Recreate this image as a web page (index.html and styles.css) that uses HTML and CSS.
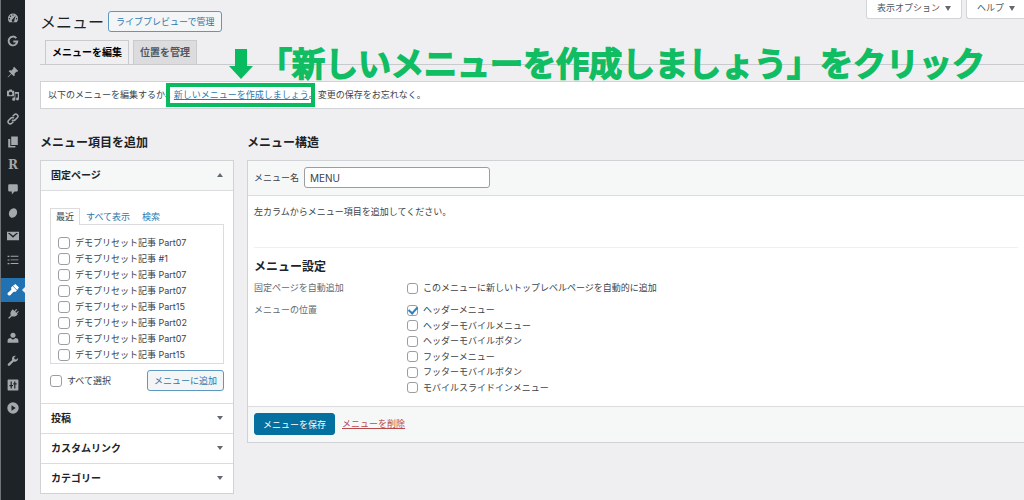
FILE: index.html
```html
<!DOCTYPE html>
<html lang="ja">
<head>
<meta charset="utf-8">
<title>メニュー</title>
<link rel="stylesheet" href="styles.css">
</head>
<body>
<div class="app">
  <nav class="sidebar" aria-label="管理メニュー">
    <ul class="nav-group">
      <li><a href="#" aria-label="ダッシュボード"><svg viewBox="0 0 20 20"><path fill-rule="evenodd" d="M3.8 17a8.5 8.5 0 1 1 12.4 0zM10 4a1.2 1.2 0 1 0 0 2.400 1.200 1.200 0 0 0 0-2.400zM5.800 6a1.200 1.200 0 1 0 0 2.400 1.200 1.200 0 0 0 0-2.400zM4 10a1.200 1.200 0 1 0 0 2.400A1.200 1.200 0 0 0 4 10zM16 10a1.200 1.200 0 1 0 0 2.400 1.200 1.200 0 0 0 0-2.400zM14.500 6l-5.200 6.200a2.200 2.200 0 1 0 2.900 1.500z"/></svg></a></li>
      <li><a href="#" aria-label="Site Kit"><svg viewBox="0 0 20 20"><path class="line" stroke-width="3.200" d="M15.500 5.200A7.300 7.300 0 1 0 17.200 10.800H10.500"/></svg></a></li>
    </ul>
    <ul class="nav-group">
      <li><a href="#" aria-label="投稿"><svg viewBox="0 0 20 20"><path d="M10.400 3l1.400-1.700 7 7-1.700 1.400-1.400-.3-3 3 .2 3.300-1.500 1.500-4-4L2 18.600l-.9.300.3-.9L6.800 12.600l-4-4 1.500-1.500 3.300.2 3-3z"/></svg></a></li>
      <li><a href="#" aria-label="メディア"><svg viewBox="0 0 20 20"><path fill-rule="evenodd" d="M1 3h2l1-2h4l1 2h3v9H0V3zM6 4.500a3 3 0 1 0 0 6 3 3 0 0 0 0-6zM13 5h7v11.500a2.500 2.500 0 1 1-2-2.400V8h-4v9a2.700 2.700 0 1 1-2-2.600V13h1z"/></svg></a></li>
      <li><a href="#" aria-label="リンク"><svg viewBox="0 0 20 20"><g class="line" stroke-width="2.600"><path d="M8.500 11.500a3.500 3.500 0 0 0 5 0l3.600-3.600a3.500 3.500 0 0 0-5-5L9.500 5.500M11.500 8.500a3.500 3.500 0 0 0-5 0l-3.600 3.600a3.500 3.500 0 0 0 5 5l2.600-2.600"/></g></svg></a></li>
      <li><a href="#" aria-label="固定ページ"><svg viewBox="0 0 20 20"><path d="M7 1h11v14H7zM2 5h3.500v11.500H14V19H2z"/></svg></a></li>
      <li><a href="#" class="letter">R</a></li>
      <li><a href="#" aria-label="コメント"><svg viewBox="0 0 20 20"><path d="M4 2h12a2 2 0 0 1 2 2v8a2 2 0 0 1-2 2h-3.500L8 19v-5H4a2 2 0 0 1-2-2V4a2 2 0 0 1 2-2z"/></svg></a></li>
      <li><a href="#" aria-label="ブロック"><svg viewBox="0 0 20 20"><ellipse cx="10" cy="10" rx="6.500" ry="8.200" transform="rotate(25 10 10)"/></svg></a></li>
      <li><a href="#" aria-label="お問い合わせ"><svg viewBox="0 0 20 20"><path fill-rule="evenodd" d="M0 3h20v14H0zM1.500 5L10 13l8.500-8h-3L10 9.500 4.500 5z"/></svg></a></li>
      <li><a href="#" aria-label="目次"><svg viewBox="0 0 20 20"><path d="M1 3h3v2H1zM6 3h13v1.500H6zM1 9h3v2H1zM6 9h13v1.500H6zM1 15h3v2H1zM6 15h13v1.500H6z"/></svg></a></li>
    </ul>
    <ul class="nav-group tools">
      <li><a href="#" class="current" aria-label="外観"><svg viewBox="0 0 20 20"><path d="M10 3l4-3 6 6-3 4zM9.300 3.500l7.200 7.200-2 2.400-3.500-.3-5.500 6.100C3.500 20.500-.5 17.500 1.200 14.800l6-5.300-.3-3.500z"/></svg></a></li>
      <li><a href="#" aria-label="プラグイン"><svg viewBox="0 0 20 20"><path d="M12.400 4.900l3-3.200 1.400 1.400-3 3.200 1.600 1.600 3-3 1.300 1.400-3 3 1.300 1.300-1.500 1.500c-2.400 2.400-6 2.800-8.500 1.500L3.500 18 1.800 16.500 6.400 12C5 9.500 5.600 6 8 3.600L9.500 2z"/></svg></a></li>
      <li><a href="#" aria-label="ユーザー"><svg viewBox="0 0 20 20"><circle cx="10" cy="5.500" r="4.200"/><path d="M1 18v-4c0-2 2-4 5-4l4 3 4-3c3 0 5 2 5 4v4z"/></svg></a></li>
      <li><a href="#" aria-label="ツール"><svg viewBox="0 0 20 20"><path d="M16.700 9.700c-1.500 1.500-3.700 1.800-5.500 1.100L4.700 17.600a2.100 2.100 0 0 1-3-3l7-6.400c-.7-1.900-.4-4 1.100-5.500 1.400-1.400 3.300-1.800 5-1.300L12 4.200l.5 3 3 .5 2.700-2.800c.5 1.700 0 3.500-1.500 4.800z"/></svg></a></li>
      <li><a href="#" aria-label="設定"><svg viewBox="0 0 20 20"><path fill-rule="evenodd" d="M2 1h16a1 1 0 0 1 1 1v16a1 1 0 0 1-1 1H2a1 1 0 0 1-1-1V2a1 1 0 0 1 1-1zM6 4v6H4v2h2v4h2v-4h2v-2H8V4zM12 4v3h-1.500v2H12v7h2V9h2V7h-2V4z"/></svg></a></li>
      <li><a href="#" aria-label="メニューを閉じる"><svg viewBox="0 0 20 20"><path fill-rule="evenodd" d="M10 .5a9.500 9.500 0 1 0 0 19 9.500 9.500 0 0 0 0-19zM7.500 5.500l7 4.500-7 4.500z"/></svg></a></li>
    </ul>
  </nav>

  <main class="content">
    <div class="screen-meta">
      <button type="button" class="meta-tab">表示オプション <span class="arrow"></span></button>
      <button type="button" class="meta-tab edge">ヘルプ <span class="arrow"></span></button>
    </div>
    <header class="title-row">
      <h1>メニュー</h1>
      <a href="#" class="button">ライブプレビューで管理</a>
    </header>
    <div class="tabs">
      <a href="#" class="tab active">メニューを編集</a>
      <a href="#" class="tab">位置を管理</a>
    </div>
    <p class="notice">以下のメニューを編集するか、<span class="marked"><a href="#">新しいメニューを作成しましょう</a></span>。変更の保存をお忘れなく。</p>
    <div class="callout">
      <svg class="down" viewBox="0 0 24 30"><path d="M6 0h12v17h6L12 30 0 17h6z"/></svg>
      <strong>「新しいメニューを作成しましょう」をクリック</strong>
    </div>

    <div class="columns">
      <section class="add-items">
        <h2>メニュー項目を追加</h2>
        <div class="panel">
          <h3><button type="button" class="section-toggle open">固定ページ <span class="arrow"></span></button></h3>
          <div class="section-body">
            <div class="mini-tabs">
              <a href="#" class="mini-tab active">最近</a>
              <a href="#" class="mini-tab">すべて表示</a>
              <a href="#" class="mini-tab">検索</a>
            </div>
            <div class="page-list">
              <label><input type="checkbox">デモプリセット記事 Part07</label>
              <label><input type="checkbox">デモプリセット記事 #1</label>
              <label><input type="checkbox">デモプリセット記事 Part07</label>
              <label><input type="checkbox">デモプリセット記事 Part07</label>
              <label><input type="checkbox">デモプリセット記事 Part15</label>
              <label><input type="checkbox">デモプリセット記事 Part02</label>
              <label><input type="checkbox">デモプリセット記事 Part07</label>
              <label><input type="checkbox">デモプリセット記事 Part15</label>
            </div>
            <div class="list-actions">
              <label><input type="checkbox">すべて選択</label>
              <button type="button" class="button tinted">メニューに追加</button>
            </div>
          </div>
          <h3><button type="button" class="section-toggle">投稿 <span class="arrow"></span></button></h3>
          <h3><button type="button" class="section-toggle">カスタムリンク <span class="arrow"></span></button></h3>
          <h3><button type="button" class="section-toggle">カテゴリー <span class="arrow"></span></button></h3>
        </div>
      </section>

      <section class="structure">
        <h2>メニュー構造</h2>
        <form class="panel flush">
          <div class="name-row">
            <label for="menu-name">メニュー名</label>
            <input type="text" id="menu-name" value="MENU">
          </div>
          <div class="settings">
            <p>左カラムからメニュー項目を追加してください。</p>
            <h2>メニュー設定</h2>
            <div class="setting">
              <span class="legend" id="auto-add">固定ページを自動追加</span>
              <div class="options" role="group" aria-labelledby="auto-add">
                <label><input type="checkbox">このメニューに新しいトップレベルページを自動的に追加</label>
              </div>
            </div>
            <div class="setting">
              <span class="legend" id="locations">メニューの位置</span>
              <div class="options" role="group" aria-labelledby="locations">
                <label><input type="checkbox" checked>ヘッダーメニュー</label>
                <label><input type="checkbox">ヘッダーモバイルメニュー</label>
                <label><input type="checkbox">ヘッダーモバイルボタン</label>
                <label><input type="checkbox">フッターメニュー</label>
                <label><input type="checkbox">フッターモバイルボタン</label>
                <label><input type="checkbox">モバイルスライドインメニュー</label>
              </div>
            </div>
          </div>
          <div class="form-footer">
            <button type="button" class="button primary">メニューを保存</button>
            <a href="#" class="delete">メニューを削除</a>
          </div>
        </form>
      </section>
    </div>
  </main>
</div>
</body>
</html>
```
FILE: styles.css
```css
* { box-sizing: border-box; }
body {
  margin: 0;
  background: #efeff1;
  color: #3c434a;
  font: 9px/16px Inter, "Noto Sans CJK JP", sans-serif;
  overflow: hidden;
}
h1, h2, h3, p, ul { margin: 0; padding: 0; }
a { color: #2f78ad; }
button, input { font: inherit; color: inherit; margin: 0; }
button { cursor: pointer; }

.app { display: flex; min-height: 100vh; }

/* Sidebar */
.sidebar {
  flex: none;
  width: 25px;
  padding-top: 6px;
  display: flex;
  flex-direction: column;
  gap: 7px;
  background: #1e2328;
  border-left: 1px solid #6f7479;
}
.nav-group { list-style: none; }
.nav-group a {
  display: flex;
  align-items: center;
  justify-content: center;
  position: relative;
  height: 23px;
  color: #a3a8ad;
  text-decoration: none;
}
.nav-group li:nth-child(even) a, .nav-group .current { height: 24px; }
.nav-group svg { width: 12px; height: 12px; fill: currentColor; }
.nav-group .line { fill: none; stroke: currentColor; }
.nav-group .letter { font: bold 12px/21px "DejaVu Serif", serif; }
.nav-group .current { background: #2271b1; color: #fff; }
.nav-group .current::after {
  content: "";
  position: absolute;
  right: 0;
  border: 3px solid transparent;
  border-left: 0;
  border-right-color: #efeff1;
}

/* Page head */
.content { flex: 1; min-width: 0; padding-left: 15px; position: relative; }
.screen-meta {
  position: absolute;
  top: 0;
  right: 0;
  display: flex;
  gap: 4px;
}
.meta-tab {
  height: 19px;
  padding: 0 10px 2px;
  display: flex;
  align-items: center;
  gap: 5px;
  background: #fff;
  border: 1px solid #d3d4d8;
  border-top: 0;
  border-radius: 0 0 3px 3px;
  color: #50575e;
}
.meta-tab.edge { padding-right: 9px; border-right: 0; border-bottom-right-radius: 0; }
.arrow {
  border: 3px solid transparent;
  border-top: 5px solid #646970;
  border-bottom: 0;
}
.title-row { display: flex; align-items: center; gap: 4px; padding-top: 11px; }
h1 { font-size: 16px; line-height: 20px; font-weight: 400; color: #1d2327; }
.button {
  height: 21px;
  padding: 0 7px;
  line-height: 19px;
  border: 1px solid #5d98c0;
  border-radius: 3px;
  background: #f3f5f6;
  color: #2f78ad;
  text-decoration: none;
  white-space: nowrap;
}
.tinted { padding: 0 6px; }
.tabs {
  display: flex;
  gap: 4px;
  margin-top: 8px;
  padding-left: 5px;
  border-bottom: 1px solid #c8cacd;
}
.tab {
  height: 24px;
  padding: 0 6px;
  border: 1px solid #c8cacd;
  border-bottom: 0;
  background: #dcdcde;
  color: #50575e;
  font-size: 10px;
  line-height: 23px;
  font-weight: 600;
  text-decoration: none;
}
.tab.active { margin-bottom: -1px; background: #efeff1; color: #000; }
.notice {
  margin-top: 16px;
  padding: 5px 7px;
  background: #fff;
  border: 1px solid #d0d2d5;
  border-right: 0;
}

/* Tutorial marks */
.marked { position: relative; }
.marked::after {
  content: "";
  position: absolute;
  inset: -6px -6px -7px -8px;
  border: 4px solid #08bb5e;
  pointer-events: none;
}
.callout {
  position: absolute;
  top: 49px;
  left: 204px;
  display: flex;
  align-items: center;
  gap: 6px;
  color: #10bd62;
  white-space: nowrap;
}
.callout .down { width: 24px; height: 30px; fill: #08bb5e; }
.callout strong {
  padding-bottom: 4px;
  font: 500 33px/26px "Noto Sans CJK JP", sans-serif;
  -webkit-text-stroke: 2px #10bd62;
  stroke-linejoin: round;
}

/* Columns */
.columns { display: flex; gap: 13px; margin-top: 24px; }
.add-items { flex: none; width: 194px; }
.structure { flex: 1; min-width: 0; }
h2 { font-size: 12px; line-height: 20px; font-weight: 600; color: #1d2327; }
.panel { margin-top: 7px; background: #fff; border: 1px solid #d0d2d5; }
.flush { border-right: 0; }
.section-toggle {
  display: flex;
  align-items: center;
  justify-content: space-between;
  width: 100%;
  height: 30px;
  padding: 0 10px 2px;
  background: #fff;
  border: 0;
  border-top: 1px solid #dcdcde;
  font-size: 10px;
  font-weight: 600;
  color: #1d2327;
}
.section-toggle.open { background: #f6f7f7; border-top: 0; border-bottom: 1px solid #dcdcde; }
.section-toggle .arrow { border-top-width: 4px; }
.section-toggle.open .arrow { border-top: 0; border-bottom: 4px solid #646970; }
.section-body { padding: 17px 9px 12px; }
.mini-tabs { display: flex; gap: 0; }
.mini-tab { padding: 0 5px; border: 1px solid transparent; border-bottom: 0; line-height: 15px; text-decoration: none; }
.mini-tab.active {
  margin-bottom: -1px;
  padding-bottom: 1px;
  background: #fff;
  border-color: #dcdcde;
  color: #3c434a;
  z-index: 1;
}
.page-list { padding: 10px 7px 0; height: 140px; overflow: hidden; border: 1px solid #dcdcde; }
label { display: flex; align-items: center; gap: 5px; }
input[type="checkbox"] {
  appearance: none;
  flex: none;
  display: grid;
  place-items: center;
  width: 12px;
  height: 12px;
  border: 1px solid #9a9ea3;
  border-radius: 3px;
  background: #fff;
}
.options input[type="checkbox"] { width: 11px; height: 11px; }
input[type="checkbox"]:checked::before {
  content: "";
  width: 4px;
  height: 7px;
  border: solid #2f80bd;
  border-width: 0 2px 2px 0;
  transform: translateY(-1px) rotate(42deg);
}
.list-actions { display: flex; align-items: center; justify-content: space-between; margin-top: 6px; }

/* Menu form */
.name-row {
  display: flex;
  align-items: center;
  gap: 5px;
  padding: 6px 6px 7px;
  background: #f6f7f7;
  border-bottom: 1px solid #dcdcde;
}
.name-row input {
  width: 186px;
  height: 21px;
  padding: 0 5px;
  border: 1px solid #9a9ea3;
  border-radius: 3px;
  background: #fff;
  font-size: 10px;
}
.settings { padding: 8px 6px 11px; }
.settings p { padding-bottom: 27px; border-bottom: 1px solid #f0f0f1; }
.settings h2 { margin-top: 9px; }
.setting { display: flex; margin-top: 3px; }
.setting + .setting { margin-top: 6px; }
.legend { flex: none; width: 153px; color: #646970; }
.options label { line-height: 15px; }
.options label:nth-child(odd) { line-height: 16px; }
.form-footer {
  display: flex;
  align-items: center;
  gap: 7px;
  padding: 6px 6px 7px;
  background: #f6f7f7;
  border-top: 1px solid #dcdcde;
}
.primary { height: 22px; padding: 0 8px; background: #04709f; border-color: #04709f; color: #fff; }
.delete { color: #b94a4c; }
```
